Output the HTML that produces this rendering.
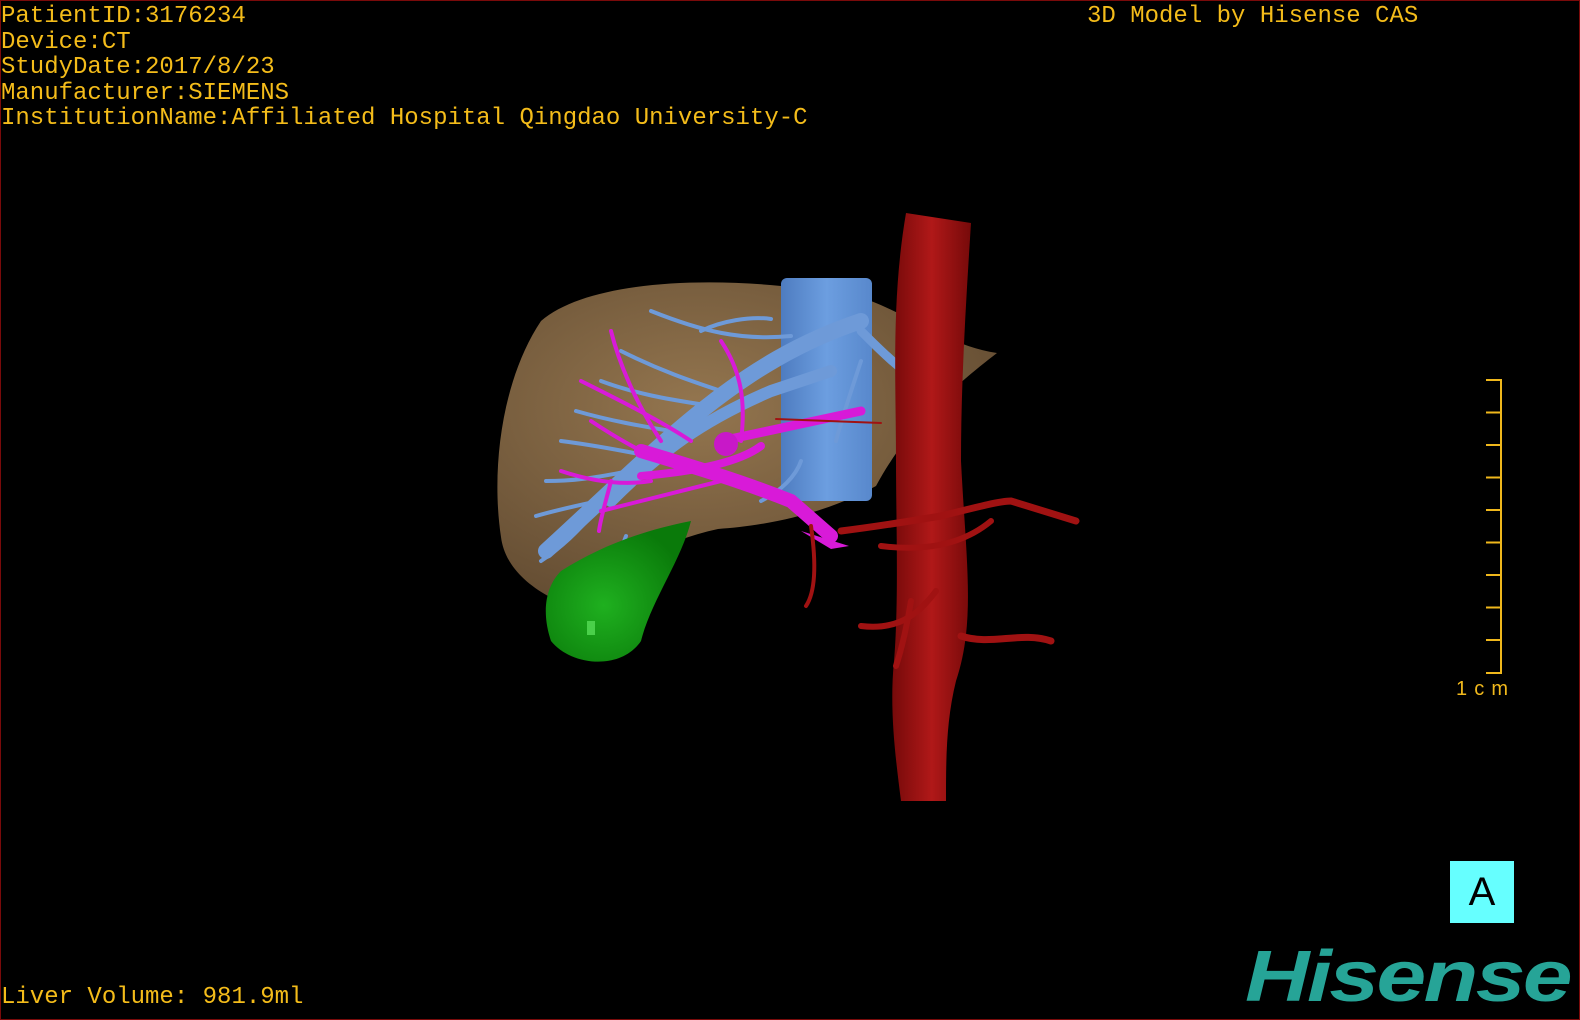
<!DOCTYPE html>
<html><head><meta charset="utf-8"><style>
html,body{margin:0;padding:0;background:#000;}
#w{position:relative;width:1580px;height:1020px;background:#000;overflow:hidden;box-sizing:border-box;border:1px solid #7a0a0a;}
.t{position:absolute;font-family:"Liberation Mono",monospace;font-size:24px;color:#f4bc1a;line-height:25.5px;white-space:pre;letter-spacing:0px;}
#A{position:absolute;left:1449px;top:860px;width:64px;height:62px;background:#66ffff;color:#000;font-family:"Liberation Sans",sans-serif;font-size:40px;text-align:center;line-height:62px;}
#logo{position:absolute;left:1244px;top:936px;font-family:"Liberation Sans",sans-serif;font-weight:bold;font-style:italic;font-size:72px;color:#26a497;letter-spacing:-2px;line-height:80px;transform:scaleX(1.24);transform-origin:left top;}
</style></head><body><div id="w">
<div class="t" style="left:0;top:3px">PatientID:3176234
Device:CT
StudyDate:2017/8/23
Manufacturer:SIEMENS
InstitutionName:Affiliated Hospital Qingdao University-C</div>
<div class="t" style="left:1086px;top:3px">3D Model by Hisense CAS</div>
<div class="t" style="left:0;top:984px">Liver Volume: 981.9ml</div>
<svg width="1580" height="1020" style="position:absolute;left:0;top:0">
<defs>
<radialGradient id="lv" cx="0.4" cy="0.4" r="0.7"><stop offset="0" stop-color="#94764f"/><stop offset="1" stop-color="#634c32"/></radialGradient>
<linearGradient id="ao" x1="0" x2="1"><stop offset="0" stop-color="#760a0a"/><stop offset="0.5" stop-color="#b01818"/><stop offset="1" stop-color="#760a0a"/></linearGradient>
<linearGradient id="ivc" x1="0" x2="1"><stop offset="0" stop-color="#4e7cc0"/><stop offset="0.5" stop-color="#6c9ee0"/><stop offset="1" stop-color="#5888cc"/></linearGradient>
<radialGradient id="gb" cx="0.4" cy="0.6" r="0.6"><stop offset="0" stop-color="#1fb01f"/><stop offset="1" stop-color="#0a7a0a"/></radialGradient>
</defs>
<path d="M500,536 C490,470 500,380 540,320 C580,285 680,275 780,285 L870,300 C920,320 950,345 996,352 C960,380 910,420 875,485 C820,515 760,525 717,528 C660,540 600,575 547,595 C520,580 503,560 500,536 Z" fill="url(#lv)"/>
<rect x="780" y="277" width="91" height="223" rx="6" fill="url(#ivc)"/>
<g fill="none" stroke="#6e9ad8" stroke-linecap="round">
<path d="M545,550 C600,500 650,450 700,410 C750,370 800,340 860,320" stroke-width="16"/>
<path d="M610,500 C660,450 700,420 770,390 L830,370" stroke-width="12"/>
<path d="M860,330 C880,350 900,370 925,385" stroke-width="9"/>
<g stroke-width="4">
<path d="M650,310 C700,330 740,340 790,335"/><path d="M620,350 C660,370 690,380 720,390"/><path d="M600,380 C640,395 680,400 710,405"/>
<path d="M575,410 C610,420 640,425 670,430"/><path d="M560,440 C600,445 620,450 650,455"/><path d="M545,480 C580,480 600,475 630,470"/>
<path d="M535,515 C570,505 600,500 620,495"/><path d="M560,540 C580,520 600,500 615,490"/><path d="M540,560 C570,540 585,520 600,505"/>
<path d="M700,330 C720,320 750,315 770,318"/><path d="M860,360 C850,390 840,420 835,440"/><path d="M760,500 C780,490 795,475 800,460"/>
<path d="M590,590 C610,570 620,550 625,535"/>
</g></g>
<g fill="none" stroke="#d81ad8" stroke-linecap="round">
<path d="M640,450 C690,465 740,480 790,500 L830,535" stroke-width="14"/>
<path d="M640,475 C700,470 740,460 760,445" stroke-width="8"/>
<path d="M720,440 L860,410" stroke-width="9"/>
<g stroke-width="4">
<path d="M600,510 C640,500 680,490 720,480"/><path d="M580,380 C620,400 660,420 690,440"/><path d="M610,330 C620,370 640,410 660,440"/>
<path d="M720,340 C740,370 745,400 740,440"/><path d="M560,470 C590,480 620,485 650,480"/><path d="M590,420 C620,440 640,450 660,460"/>
<path d="M610,480 C605,500 600,515 598,530"/>
</g></g>
<circle cx="725" cy="443" r="12" fill="#c818c8"/>
<path d="M800,530 L848,545 L830,548 Z" fill="#d81ad8"/>
<path d="M905,212 L970,222 C965,300 960,380 960,460 C965,560 975,620 955,680 C945,720 945,760 945,800 L900,800 C895,760 888,710 893,660 C898,600 895,520 895,460 C895,380 890,300 905,212 Z" fill="url(#ao)"/>
<g fill="none" stroke="#a01212" stroke-linecap="round">
<path d="M840,530 C880,525 910,520 940,515 C980,505 1000,500 1010,500 L1075,520" stroke-width="7"/>
<path d="M880,545 C920,550 960,545 990,520" stroke-width="6"/>
<path d="M810,525 C815,560 815,590 805,605" stroke-width="4"/>
<path d="M860,625 C900,630 920,610 935,590" stroke-width="6"/>
<path d="M960,635 C990,645 1020,630 1050,640" stroke-width="7"/>
<path d="M910,600 C905,630 900,650 895,665" stroke-width="6"/>
<path d="M775,418 L880,422" stroke-width="2"/>
</g>
<path d="M560,570 C600,545 640,530 690,520 C680,560 650,600 640,640 C620,670 570,665 550,640 C540,610 545,585 560,570 Z" fill="url(#gb)"/>
<rect x="586" y="620" width="8" height="14" fill="#4ad04a"/>
<g stroke="#f0b81c" stroke-width="2" fill="none">
<path d="M1485,379 H1500 V672 H1485"/>
<path d="M1485,411.5 H1500 M1485,444 H1500 M1485,476.5 H1500 M1485,509 H1500 M1485,541.5 H1500 M1485,574 H1500 M1485,606.5 H1500 M1485,639 H1500"/>
</g>
<text x="1455" y="694" font-family="Liberation Sans,sans-serif" font-size="20" fill="#f0b81c" textLength="52">1cm</text>
</svg>
<div id="A">A</div>
<div id="logo">Hisense</div>
</div></body></html>
